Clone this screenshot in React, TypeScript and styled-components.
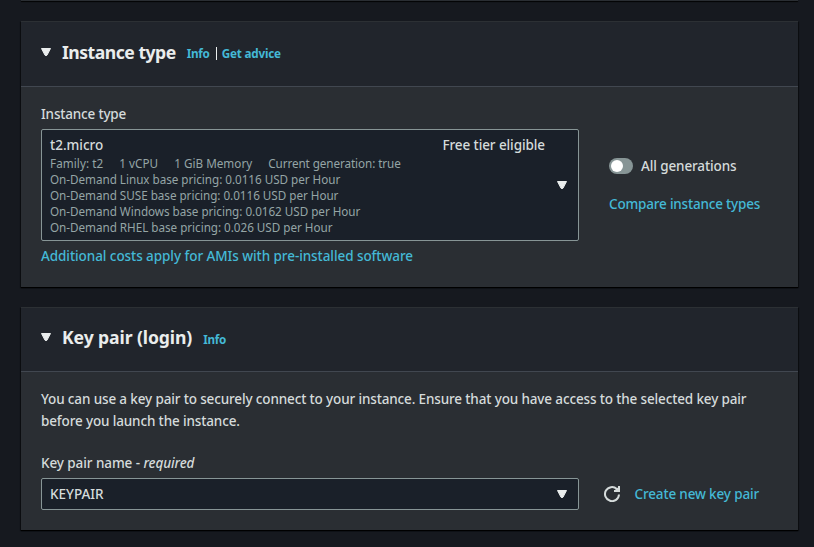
import React from "react";
import styled, { createGlobalStyle } from "styled-components";

const GlobalStyle = createGlobalStyle`
  * { box-sizing: border-box; }
  body {
    margin: 0;
    background: #16191f;
    color: #d5dbdb;
    font-family: "Noto Sans", "Open Sans", sans-serif;
    font-size: 13.5px;
    font-weight: 500;
    line-height: 22px;
    overflow: hidden;
  }
`;

const Page = styled.main`
  height: 547px;
  overflow: hidden;
  padding: 0 16px 0 21px;
  background: #16191f;
`;

const PreviousPanel = styled.div`
  height: 1px;
  margin-bottom: 20px;
  background: #2a2e33;
  box-shadow: 0 1px 1px #000;
`;

const Panel = styled.section`
  margin-bottom: 20px;
  background: #2a2e33;
  border-top: 1px solid #2c3034;
  box-shadow: 0 1px 1px 0 #000, 1px 1px 1px 0 rgba(0, 0, 0, 0.35), -1px 1px 1px 0 rgba(0, 0, 0, 0.35);
`;

const PanelHeader = styled.header<{ $height: number }>`
  display: flex;
  align-items: center;
  height: ${(p) => p.$height}px;
  padding: 0 20px 5px;
  background: #21252c;
  border-bottom: 1px solid #414750;
`;

const Title = styled.h2<{ $spacing: number }>`
  margin: 0 11px 0 11px;
  color: #eaeded;
  font-size: 17.6px;
  font-weight: 700;
  line-height: 22px;
  letter-spacing: ${(p) => p.$spacing}px;
  white-space: nowrap;
`;

const HeaderLinks = styled.div`
  display: flex;
  align-items: center;
  padding-top: 3px;
  line-height: 20px;
`;

const Link = styled.a<{ $spacing?: number }>`
  color: #44b9d6;
  letter-spacing: ${(p) => p.$spacing ?? -0.15}px;
  text-decoration: none;
  white-space: nowrap;
`;

const HeaderLink = styled(Link)`
  font-size: 11.7px;
  font-weight: 700;
`;

const Divider = styled.span`
  width: 1px;
  height: 13px;
  margin: 0 5px 0 6px;
  background: #eaeded;
`;

const PanelBody = styled.div`
  padding: 16px 20px 20px;
`;

const Text = styled.span<{ $spacing?: number }>`
  display: block;
  letter-spacing: ${(p) => p.$spacing ?? -0.12}px;
  white-space: nowrap;
`;

const Label = styled(Text)`
  margin-bottom: 4px;
`;

const Description = styled.p`
  margin: 0 0 20px;
`;

const FieldRow = styled.div`
  display: grid;
  grid-template-columns: 538px 1fr;
`;

const Select = styled.div<{ $padding: string }>`
  display: flex;
  align-items: center;
  justify-content: space-between;
  padding: ${(p) => p.$padding};
  background: #1a2029;
  border: 1px solid #879596;
  border-radius: 2px;
`;

const Option = styled.div`
  width: 495px;
`;

const OptionTitle = styled.div`
  display: flex;
  justify-content: space-between;
`;

const Details = styled.div`
  margin: -1px 0 1px;
  color: #95a5a6;
  font-size: 11.7px;
  font-weight: 450;
  line-height: 16px;
`;

const Tags = styled.div`
  display: flex;
  gap: 16px;
`;

const Help = styled.div`
  margin-top: 4px;
`;

const SideControls = styled.div`
  display: flex;
  flex-direction: column;
  gap: 16px;
  padding: 26px 0 0 30px;
`;

const ToggleRow = styled.div`
  display: flex;
  align-items: center;
  gap: 8px;
`;

const Toggle = styled.span`
  display: flex;
  align-items: center;
  width: 24px;
  height: 16px;
  padding: 2px;
  border-radius: 8px;
  background: #879596;
`;

const Knob = styled.span`
  width: 12px;
  height: 12px;
  border-radius: 50%;
  background: #fff;
`;

const KeyActions = styled.div`
  display: flex;
  align-items: center;
  gap: 14.5px;
  padding-left: 25px;
`;

const Icon = styled.svg`
  display: block;
  flex: none;
`;

const Caret = () => (
  <Icon width="10" height="8" viewBox="0 0 10 8">
    <path d="M.5.5h9L6 7.2Q5 8 4 7.2z" fill="#eaeded" stroke="#eaeded" strokeWidth="1" strokeLinejoin="round" />
  </Icon>
);

const Refresh = () => (
  <Icon width="16" height="16" viewBox="0 0 16 16" fill="none" stroke="#d5dbdb" strokeWidth="2">
    <path d="M15 8.5A7 7 0 1 1 12.8 3L14 4.5" />
    <path d="M15 0v5h-5" />
    <path d="M11 4l3-2.5V4z" fill="#d5dbdb" stroke="none" />
  </Icon>
);

const prices = [
  "On-Demand Linux base pricing: 0.0116 USD per Hour",
  "On-Demand SUSE base pricing: 0.0116 USD per Hour",
  "On-Demand Windows base pricing: 0.0162 USD per Hour",
  "On-Demand RHEL base pricing: 0.026 USD per Hour",
];

export default function App() {
  return (
    <>
      <GlobalStyle />
      <Page>
        <PreviousPanel />
        <Panel>
          <PanelHeader $height={65}>
            <Caret />
            <Title $spacing={-0.5}>Instance type</Title>
            <HeaderLinks>
              <HeaderLink $spacing={-0.25}>Info</HeaderLink>
              <Divider />
              <HeaderLink $spacing={-0.2}>Get advice</HeaderLink>
            </HeaderLinks>
          </PanelHeader>
          <PanelBody>
            <Label $spacing={-0.18}>Instance type</Label>
            <FieldRow>
              <Select $padding="4px 11px 4px 8px">
                <Option>
                  <OptionTitle>
                    <Text $spacing={0}>t2.micro</Text>
                    <Text $spacing={-0.09}>Free tier eligible</Text>
                  </OptionTitle>
                  <Details>
                    <Tags>
                      <Text $spacing={0.06}>Family: t2</Text>
                      <Text $spacing={0.04}>1 vCPU</Text>
                      <Text $spacing={0.02}>1 GiB Memory</Text>
                      <Text $spacing={-0.08}>Current generation: true</Text>
                    </Tags>
                    {prices.map((price) => (
                      <Text key={price} $spacing={-0.03}>{price}</Text>
                    ))}
                  </Details>
                </Option>
                <Caret />
              </Select>
              <SideControls>
                <ToggleRow>
                  <Toggle><Knob /></Toggle>
                  <Text>All generations</Text>
                </ToggleRow>
                <Link $spacing={-0.19}>Compare instance types</Link>
              </SideControls>
            </FieldRow>
            <Help>
              <Link $spacing={-0.07}>Additional costs apply for AMIs with pre-installed software</Link>
            </Help>
          </PanelBody>
        </Panel>
        <Panel>
          <PanelHeader $height={64}>
            <Caret />
            <Title $spacing={-0.1}>Key pair (login)</Title>
            <HeaderLinks>
              <HeaderLink $spacing={-0.25}>Info</HeaderLink>
            </HeaderLinks>
          </PanelHeader>
          <PanelBody>
            <Description>
              <Text $spacing={-0.14}>You can use a key pair to securely connect to your instance. Ensure that you have access to the selected key pair</Text>
              <Text $spacing={-0.14}>before you launch the instance.</Text>
            </Description>
            <Label $spacing={-0.08}>Key pair name - <em>required</em></Label>
            <FieldRow>
              <Select $padding="4px 11px 4px 8px">
                <Text $spacing={0}>KEYPAIR</Text>
                <Caret />
              </Select>
              <KeyActions>
                <Refresh />
                <Link>Create new key pair</Link>
              </KeyActions>
            </FieldRow>
          </PanelBody>
        </Panel>
      </Page>
    </>
  );
}
